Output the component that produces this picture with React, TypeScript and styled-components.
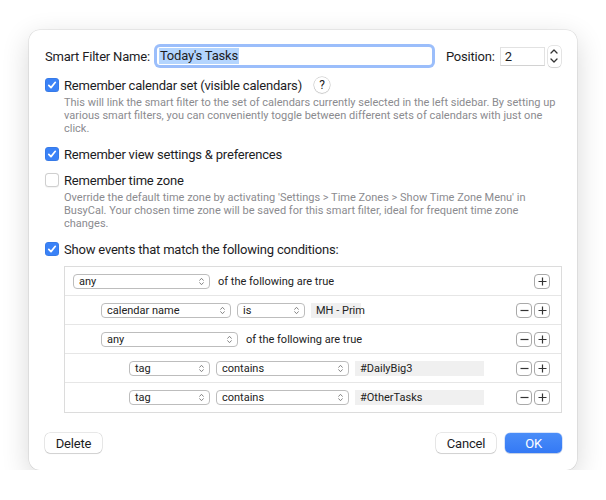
import React from 'react';
import styled, { createGlobalStyle } from 'styled-components';

const GlobalStyle = createGlobalStyle`
  html, body {
    margin: 0;
    padding: 0;
    background: #ffffff;
  }
  body {
    font-family: Roboto, "Liberation Sans", sans-serif;
    color: #1d1d1f;
    -webkit-font-smoothing: antialiased;
  }
`;

const Dialog = styled.div`
  margin: 30px 0 0 29px;
  width: 548px;
  height: 440px;
  box-sizing: border-box;
  padding: 14px 15px 17px 16px;
  background: #fff;
  border-radius: 11px;
  box-shadow: 0 0 0 0.5px rgba(0, 0, 0, 0.12), 0 8px 28px rgba(0, 0, 0, 0.16);
  display: flex;
  flex-direction: column;
`;

const NameRow = styled.div`
  display: flex;
  align-items: center;
  height: 24px;
  font-size: 13px;
  letter-spacing: -0.2px;
`;

const Label = styled.span`
  font-size: 13px;
  white-space: nowrap;
`;

const NameField = styled.div`
  margin: 0 0 0 7px;
  width: 275px;
  height: 18px;
  box-sizing: border-box;
  border-radius: 3px;
  box-shadow: 0 0 0 3px rgba(73, 136, 247, 0.55);
  display: flex;
  align-items: center;
  padding-left: 2px;
`;

const Selected = styled.span`
  background: #b4d5fe;
  font-size: 13px;
  line-height: 16px;
  padding: 0 1px;
`;

const PositionLabel = styled(Label)`
  margin-left: 14px;
`;

const PositionField = styled.div`
  margin-left: 5px;
  width: 45px;
  height: 19px;
  box-sizing: border-box;
  border: 1px solid #e2e2e2;
  border-bottom-color: #d2d2d2;
  font-size: 13px;
  line-height: 17px;
  padding-left: 4px;
`;

const Stepper = styled.div`
  margin-left: 3px;
  width: 13px;
  height: 21px;
  box-sizing: border-box;
  border-radius: 4px;
  box-shadow: 0 0 0 0.5px rgba(0, 0, 0, 0.2), 0 1px 1px rgba(0, 0, 0, 0.08);
  display: flex;
  flex-direction: column;
  align-items: center;
  justify-content: space-around;
  padding: 2px 0;
`;

const Options = styled.div`
  display: flex;
  flex-direction: column;
  gap: 8px;
  margin-top: 8px;
`;

const Group = styled.div`
  display: flex;
  flex-direction: column;
`;

const CheckRow = styled.div`
  display: flex;
  align-items: center;
  height: 18px;
  gap: 5px;
  font-size: 13px;
  letter-spacing: -0.2px;
`;

const Box = styled.span<{ $on?: boolean }>`
  width: 14px;
  height: 14px;
  box-sizing: border-box;
  border-radius: 3.5px;
  background: ${(p) => (p.$on ? '#3a82f7' : '#fff')};
  box-shadow: ${(p) =>
    p.$on ? 'inset 0 0 0 0.5px rgba(0,0,0,0.12)' : 'inset 0 0 0 1px #cfcfcf, 0 0.5px 1px rgba(0,0,0,0.05)'};
  display: flex;
  align-items: center;
  justify-content: center;
  flex: none;
`;

const Help = styled.span`
  margin-left: 7px;
  width: 16px;
  height: 16px;
  border-radius: 50%;
  box-shadow: 0 0 0 0.5px rgba(0, 0, 0, 0.25), 0 1px 1px rgba(0, 0, 0, 0.1);
  font-size: 12px;
  letter-spacing: 0;
  display: flex;
  align-items: center;
  justify-content: center;
`;

const Desc = styled.div`
  margin: 2px 0 2px 19px;
  font-size: 11px;
  line-height: 13px;
  color: #8b8b8f;
  white-space: nowrap;
`;

const Conditions = styled.div`
  margin: 8px 0 0 19px;
  border: 1px solid #dcdcdc;
  display: flex;
  flex-direction: column;
`;

const CondRow = styled.div<{ $level: number }>`
  height: 29px;
  box-sizing: border-box;
  display: flex;
  align-items: center;
  padding: 0 11px 0 ${(p) => 8 + p.$level * 28}px;
  border-bottom: 1px solid #e6e6e6;
  font-size: 11px;
  &:last-child {
    border-bottom: none;
  }
`;

const Popup = styled.div<{ $w: number }>`
  width: ${(p) => p.$w}px;
  height: 15px;
  box-sizing: border-box;
  margin-right: 6px;
  border: 1px solid #bdbdbd;
  border-radius: 4px;
  display: flex;
  align-items: center;
  justify-content: space-between;
  padding: 0 5px 0 5px;
  font-size: 11px;
  color: #222;
  background: #fff;
`;

const RowText = styled.span`
  margin-left: 2px;
  font-size: 11px;
  color: #222;
`;

const Field = styled.div<{ $w: number }>`
  width: ${(p) => p.$w}px;
  height: 15px;
  background: #f0f0f0;
  font-size: 11px;
  line-height: 15px;
  padding-left: 5px;
  box-sizing: border-box;
  white-space: nowrap;
  color: #222;
`;

const RowButtons = styled.div`
  margin-left: auto;
  display: flex;
  gap: 2px;
`;

const SmallBtn = styled.div`
  width: 16px;
  height: 15px;
  box-sizing: border-box;
  border: 1px solid #a9a9a9;
  border-radius: 4px;
  display: flex;
  align-items: center;
  justify-content: center;
  background: #fff;
`;

const Footer = styled.div`
  margin-top: auto;
  display: flex;
  align-items: center;
  justify-content: space-between;
`;

const FooterRight = styled.div`
  display: flex;
  gap: 9px;
`;

const Button = styled.div<{ $w: number; $primary?: boolean }>`
  width: ${(p) => p.$w}px;
  height: 20px;
  border-radius: 5px;
  display: flex;
  align-items: center;
  justify-content: center;
  font-size: 13px;
  letter-spacing: -0.2px;
  background: ${(p) => (p.$primary ? 'linear-gradient(#4a8df8, #3479f5)' : '#fff')};
  color: ${(p) => (p.$primary ? '#fff' : '#1d1d1f')};
  box-shadow: ${(p) =>
    p.$primary
      ? '0 0 0 0.5px rgba(0,80,220,0.3), 0 1px 1px rgba(0,0,0,0.1)'
      : '0 0 0 0.5px rgba(0,0,0,0.18), 0 1px 1px rgba(0,0,0,0.1)'};
`;

const Check = () => (
  <svg width="10" height="10" viewBox="0 0 10 10">
    <path d="M1.8 5.3 L4 7.6 L8.3 2.3" fill="none" stroke="#fff" strokeWidth="1.7" strokeLinecap="round" strokeLinejoin="round" />
  </svg>
);

const Chevrons = () => (
  <svg width="5" height="9" viewBox="0 0 5 9">
    <path d="M0.7 3.3 L2.5 1.3 L4.3 3.3 M0.7 5.7 L2.5 7.7 L4.3 5.7" fill="none" stroke="#777" strokeWidth="0.9" strokeLinecap="round" strokeLinejoin="round" />
  </svg>
);

const StepArrow = ({ up }: { up?: boolean }) => (
  <svg width="8" height="5" viewBox="0 0 8 5">
    <path d={up ? 'M1 4 L4 1 L7 4' : 'M1 1 L4 4 L7 1'} fill="none" stroke="#333" strokeWidth="1.3" strokeLinecap="round" strokeLinejoin="round" />
  </svg>
);

const Plus = () => (
  <svg width="9" height="9" viewBox="0 0 9 9">
    <path d="M4.5 0.5 V8.5 M0.5 4.5 H8.5" stroke="#333" strokeWidth="1.2" />
  </svg>
);

const Minus = () => (
  <svg width="9" height="9" viewBox="0 0 9 9">
    <path d="M0.5 4.5 H8.5" stroke="#333" strokeWidth="1.2" />
  </svg>
);

type Cond = {
  level: number;
  popups: { w: number; t: string }[];
  text?: string;
  field?: { w: number; t: string };
  minus: boolean;
};

const conds: Cond[] = [
  { level: 0, popups: [{ w: 137, t: 'any' }], text: 'of the following are true', minus: false },
  {
    level: 1,
    popups: [
      { w: 130, t: 'calendar name' },
      { w: 68, t: 'is' },
    ],
    field: { w: 50, t: 'MH - Prim' },
    minus: true,
  },
  { level: 1, popups: [{ w: 137, t: 'any' }], text: 'of the following are true', minus: true },
  {
    level: 2,
    popups: [
      { w: 81, t: 'tag' },
      { w: 133, t: 'contains' },
    ],
    field: { w: 129, t: '#DailyBig3' },
    minus: true,
  },
  {
    level: 2,
    popups: [
      { w: 81, t: 'tag' },
      { w: 133, t: 'contains' },
    ],
    field: { w: 129, t: '#OtherTasks' },
    minus: true,
  },
];

export default function App() {
  return (
    <>
      <GlobalStyle />
      <Dialog>
        <NameRow>
          <Label>Smart Filter Name:</Label>
          <NameField>
            <Selected>Today's Tasks</Selected>
          </NameField>
          <PositionLabel>Position:</PositionLabel>
          <PositionField>2</PositionField>
          <Stepper>
            <StepArrow up />
            <StepArrow />
          </Stepper>
        </NameRow>

        <Options>
          <Group>
            <CheckRow>
              <Box $on>
                <Check />
              </Box>
              Remember calendar set (visible calendars)
              <Help>?</Help>
            </CheckRow>
            <Desc>
              This will link the smart filter to the set of calendars currently selected in the left sidebar. By setting up
              <br />
              various smart filters, you can conveniently toggle between different sets of calendars with just one
              <br />
              click.
            </Desc>
          </Group>
          <CheckRow>
            <Box $on>
              <Check />
            </Box>
            Remember view settings &amp; preferences
          </CheckRow>
          <Group>
            <CheckRow>
              <Box />
              Remember time zone
            </CheckRow>
            <Desc>
              Override the default time zone by activating 'Settings &gt; Time Zones &gt; Show Time Zone Menu' in
              <br />
              BusyCal. Your chosen time zone will be saved for this smart filter, ideal for frequent time zone
              <br />
              changes.
            </Desc>
          </Group>
          <CheckRow>
            <Box $on>
              <Check />
            </Box>
            Show events that match the following conditions:
          </CheckRow>
        </Options>

        <Conditions>
          {conds.map((c, i) => (
            <CondRow key={i} $level={c.level}>
              {c.popups.map((p, j) => (
                <Popup key={j} $w={p.w}>
                  <span>{p.t}</span>
                  <Chevrons />
                </Popup>
              ))}
              {c.text && <RowText>{c.text}</RowText>}
              {c.field && <Field $w={c.field.w}>{c.field.t}</Field>}
              <RowButtons>
                {c.minus && (
                  <SmallBtn>
                    <Minus />
                  </SmallBtn>
                )}
                <SmallBtn>
                  <Plus />
                </SmallBtn>
              </RowButtons>
            </CondRow>
          ))}
        </Conditions>

        <Footer>
          <Button $w={57}>Delete</Button>
          <FooterRight>
            <Button $w={60}>Cancel</Button>
            <Button $w={57} $primary>
              OK
            </Button>
          </FooterRight>
        </Footer>
      </Dialog>
    </>
  );
}
